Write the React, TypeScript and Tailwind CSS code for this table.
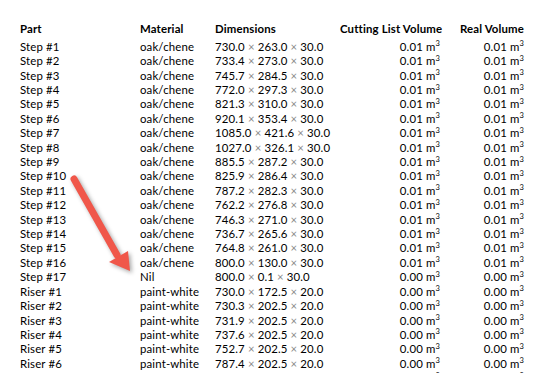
import React from "react";

type Row = { part: string; material: string; dims: [string, string, string]; cut: string; real: string };

const steps: [string, string, string][] = [
  ["730.0", "263.0", "30.0"],
  ["733.4", "273.0", "30.0"],
  ["745.7", "284.5", "30.0"],
  ["772.0", "297.3", "30.0"],
  ["821.3", "310.0", "30.0"],
  ["920.1", "353.4", "30.0"],
  ["1085.0", "421.6", "30.0"],
  ["1027.0", "326.1", "30.0"],
  ["885.5", "287.2", "30.0"],
  ["825.9", "286.4", "30.0"],
  ["787.2", "282.3", "30.0"],
  ["762.2", "276.8", "30.0"],
  ["746.3", "271.0", "30.0"],
  ["736.7", "265.6", "30.0"],
  ["764.8", "261.0", "30.0"],
  ["800.0", "130.0", "30.0"],
];

const risers: [string, string, string][] = [
  ["730.0", "172.5", "20.0"],
  ["730.3", "202.5", "20.0"],
  ["731.9", "202.5", "20.0"],
  ["737.6", "202.5", "20.0"],
  ["752.7", "202.5", "20.0"],
  ["787.4", "202.5", "20.0"],
  ["800.0", "202.5", "20.0"],
];

const rows: Row[] = [
  ...steps.map((d, i) => ({
    part: `Step #${i + 1}`,
    material: "oak/chene",
    dims: d,
    cut: "0.01",
    real: "0.01",
  })),
  { part: "Step #17", material: "Nil", dims: ["800.0", "0.1", "30.0"], cut: "0.00", real: "0.00" },
  ...risers.map((d, i) => ({
    part: `Riser #${i + 1}`,
    material: "paint-white",
    dims: d,
    cut: "0.00",
    real: "0.00",
  })),
];

const cols = "grid grid-cols-[120px_75px_125px_100px_84px] items-center";

function Vol({ v }: { v: string }) {
  return (
    <span className="whitespace-nowrap">
      {v} m<sup className="text-[7.5px] relative -top-[4.5px]">3</sup>
    </span>
  );
}

function Dims({ d }: { d: [string, string, string] }) {
  return (
    <span className="whitespace-nowrap">
      {d[0]}
      <span className="mx-[3px] text-[#8a8a8a]">×</span>
      {d[1]}
      <span className="mx-[3px] text-[#8a8a8a]">×</span>
      {d[2]}
    </span>
  );
}

export default function App() {
  return (
    <div
      className="relative h-[373px] w-[541px] overflow-hidden bg-white text-[11.4px] text-black tracking-[0.15px]"
      style={{ fontFamily: 'Lato, "Noto Sans", sans-serif' }}
    >
      <div className="pl-[20px] pt-[22px]">
        <div className={`${cols} h-[17.6px] font-bold leading-[14px] items-start`}>
          <div>Part</div>
          <div>Material</div>
          <div>Dimensions</div>
          <div className="text-right whitespace-nowrap">Cutting List Volume</div>
          <div className="text-right whitespace-nowrap">Real Volume</div>
        </div>
        {rows.map((r) => (
          <div key={r.part} className={`${cols} h-[14.42px] leading-[14px]`}>
            <div>{r.part}</div>
            <div>{r.material}</div>
            <div>
              <Dims d={r.dims} />
            </div>
            <div className="text-right">
              <Vol v={r.cut} />
            </div>
            <div className="text-right">
              <Vol v={r.real} />
            </div>
          </div>
        ))}
      </div>

      <svg
        className="absolute left-0 top-0"
        width="541"
        height="373"
        style={{ filter: "drop-shadow(2px 2px 2px rgba(0,0,0,0.35))" }}
      >
        <line x1="74" y1="179" x2="117" y2="255" stroke="#f0574a" strokeWidth="7" strokeLinecap="round" />
        <polygon points="109,262 128,251 130,271" fill="#f0574a" />
      </svg>
    </div>
  );
}
